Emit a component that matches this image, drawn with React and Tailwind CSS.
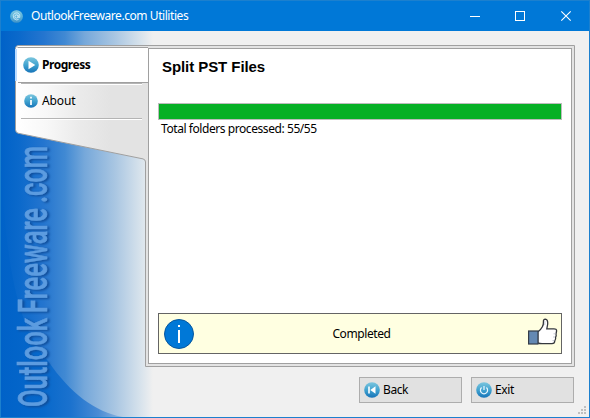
import React from 'react';

function Orb({ id, size, children }) {
  return (
    <svg width={size} height={size} viewBox="0 0 16 16" className="block shrink-0">
      <defs>
        <linearGradient id={id} x1="0" y1="0" x2="0" y2="1">
          <stop offset="0" stopColor="#7cc6de" />
          <stop offset="0.5" stopColor="#41a3d0" />
          <stop offset="1" stopColor="#1673b8" />
        </linearGradient>
      </defs>
      <circle cx="8" cy="8" r="7.8" fill={`url(#${id})`} />
      {children}
    </svg>
  );
}

function Backdrop() {
  return (
    <svg width="588" height="386" viewBox="1 31 588 386" className="absolute left-0 top-0">
      <defs>
        <linearGradient id="side" gradientUnits="userSpaceOnUse" x1="1" y1="0" x2="153" y2="0">
          <stop offset="0" stopColor="#0062c8" />
          <stop offset="0.12" stopColor="#0b69cb" />
          <stop offset="0.28" stopColor="#2475cf" />
          <stop offset="0.42" stopColor="#4089d3" />
          <stop offset="0.55" stopColor="#76a8da" />
          <stop offset="0.75" stopColor="#a9c6e2" />
          <stop offset="0.92" stopColor="#d8e3ec" />
          <stop offset="1" stopColor="#f0f0f0" />
        </linearGradient>
        <linearGradient id="corner" gradientUnits="userSpaceOnUse" x1="1" y1="0" x2="140" y2="0">
          <stop offset="0" stopColor="#0062c8" />
          <stop offset="0.3" stopColor="#0768cb" />
          <stop offset="0.5" stopColor="#1b72ce" />
          <stop offset="0.7" stopColor="#4a8bd4" />
          <stop offset="1" stopColor="#c4d7e8" />
        </linearGradient>
        <linearGradient id="menu" gradientUnits="userSpaceOnUse" x1="18" y1="0" x2="110" y2="0">
          <stop offset="0" stopColor="#ffffff" />
          <stop offset="0.3" stopColor="#f8f8f8" />
          <stop offset="0.65" stopColor="#ebebeb" />
          <stop offset="1" stopColor="#e3e3e3" />
        </linearGradient>
      </defs>
      <rect x="1" y="31" width="152" height="386" fill="url(#side)" />
      <path d="M1 150 C5 290 25 335 48 361 C70 393 95 412 123 417 L1 417 Z" fill="url(#corner)" />
      <path
        d="M18.5 45.5 H574.5 V366.5 H145.5 V162 Q145.5 159.5 143 158.9 L18 133.2 Q15.5 132.5 15.5 129.5 V48.5 Q15.5 45.5 18.5 45.5 Z"
        fill="url(#menu)"
        stroke="#a0a0a0"
      />
      <path d="M16 82.5 V49.5 L18 47.5 H148 V82.5 Z" fill="#fff" />
      <path d="M17.5 47.5 H148 M18 82.5 H148" stroke="#a0a0a0" />
      <path d="M16 49 V81" stroke="#bcdcff" strokeWidth="2" />
      <path d="M21 83.5 H142 M21 118.5 H142" stroke="#b4b4b4" />
      <path d="M21 84.5 H142 M21 119.5 H142" stroke="#fff" />
    </svg>
  );
}

function TitleBar() {
  return (
    <header className="flex h-[30px] shrink-0 items-center bg-[#0078d7] pl-[9px] text-white">
      <Orb id="logo" size={13}>
        <circle cx="8" cy="8" r="7.8" fill="#8fd0ea" fillOpacity="0.35" />
        <circle cx="8" cy="8" r="2" fill="none" stroke="#e8f8ff" strokeWidth="1" />
        <path d="M10 5.8 V9 Q10.5 10.5 12 9.2 Q13 5 9.8 3.8 Q5 2.8 4 7 Q3.6 11.5 8 12.2 L10.5 11.7" fill="none" stroke="#d8f1fb" strokeWidth="1" />
      </Orb>
      <span className="ml-2 whitespace-nowrap text-[12px] leading-5 tracking-[-0.44px]">OutlookFreeware.com Utilities</span>
      <svg width="103" height="12" viewBox="0 0 103 12" className="ml-auto mr-[17px]" fill="none" stroke="#fff">
        <path d="M1 6.5 H11" />
        <rect x="46.5" y="1.5" width="9" height="9" />
        <path d="M92.3 1.3 L101.7 10.7 M101.7 1.3 L92.3 10.7" strokeWidth="1.1" />
      </svg>
    </header>
  );
}

function Sidebar() {
  return (
    <nav className="flex w-[147px] shrink-0 flex-col pt-[17px] text-[12px] text-black">
      <div className="flex h-[34px] items-center pl-[22px]">
        <Orb id="play" size={16}>
          <path d="M5.5 3.8 L12.3 8 L5.5 12.2 Z" fill="#fff" />
        </Orb>
        <span className="ml-[3px] text-[12px] font-bold tracking-[-0.45px]">Progress</span>
      </div>
      <div className="mt-px flex h-[36px] items-center pl-[23px]">
        <Orb id="about" size={14}>
          <path d="M8 3.2 V5.2 M8 6.8 V12.6" stroke="#fff" strokeWidth="2" fill="none" />
        </Orb>
        <span className="ml-1 tracking-[-0.1px]">About</span>
      </div>
      <div className="mt-[20px] h-[274px]">
        <svg width="80" height="274" className="block overflow-visible drop-shadow-[2px_1px_1px_#0f4c98]">
          <text
            transform="translate(46 268) rotate(-90)"
            textLength="261"
            lengthAdjust="spacingAndGlyphs"
            fontFamily="Roboto, sans-serif"
            fontWeight="500"
            fontSize="40"
            wordSpacing="-2"
            fill="#5c9ce0"
            stroke="#5c9ce0"
            strokeWidth="0.7"
          >
            Outlook Freeware .com
          </text>
        </svg>
      </div>
    </nav>
  );
}

function Thumb() {
  return (
    <svg width="31" height="28" viewBox="0 0 31 28" className="-mt-1">
      <path d="M10.8 14 Q14 11.5 15.4 8.8 Q16.6 6.5 16.4 4 Q16.2 1.2 18.3 1.2 Q21 1.5 20.7 6 L19.8 10.8 H26.5 Q29.8 10.6 29.6 13 L29 16 Q29.6 18 28.6 19.2 Q29 21.5 27.8 22.7 Q27.7 25.6 25 25.6 H16 Q13 25.8 10.8 24.8 Z" fill="#fff" stroke="#35383d" strokeWidth="1.3" />
      <rect x="1.6" y="13" width="9.4" height="13" fill="#6489b3" stroke="#343c48" strokeWidth="1.2" />
      <path d="M17.8 3 V7 M28.5 15.8 H26.5 M28 19 H26 M27.2 22.5 H25.5" stroke="#c5cbd6" />
    </svg>
  );
}

function Panel() {
  return (
    <section className="flex h-[316px] w-[424px] flex-col border border-[#a0a0a0] bg-white px-[9px] pt-[8px] text-[12px]">
      <h1 className="pl-1 font-['Liberation_Sans',Arial,sans-serif] text-[15px] font-bold leading-[20px] tracking-[-0.07px]">Split PST Files</h1>
      <div className="mt-[26px] h-[17px] border border-[#bcbcbc] bg-[#06b025]" />
      <p className="pl-[3px] text-[12px] leading-[18px] tracking-[-0.43px]">Total folders processed: 55/55</p>
      <div className="mt-auto mb-[9px] flex h-[41px] items-center border border-[#646464] bg-[#ffffe1] pl-[5px] pr-[3px]">
        <svg width="30" height="30" viewBox="0 0 30 30">
          <circle cx="15" cy="15" r="14.5" fill="#0078d7" stroke="#07579e" />
          <path d="M15 6 V8 M15 11 V24" stroke="#fff" strokeWidth="2" />
        </svg>
        <span className="flex-1 pl-[2px] text-center tracking-[-0.4px]">Completed</span>
        <Thumb />
      </div>
    </section>
  );
}

function Button({ icon, label }) {
  return (
    <button className="flex h-[26px] w-[103px] items-center border border-[#adadad] bg-[#e1e1e1] pl-1 text-[12px]">
      {icon}
      <span className="ml-[3px] tracking-[-0.4px]">{label}</span>
    </button>
  );
}

export default function App() {
  return (
    <div className="flex h-[418px] w-[590px] flex-col overflow-hidden border border-[#1c80ce] bg-[#f0f0f0] font-['Noto_Sans','Open_Sans',sans-serif] text-black">
      <TitleBar />
      <main className="relative flex flex-1">
        <Backdrop />
        <div className="relative flex w-full">
          <Sidebar />
          <div className="flex flex-1 flex-col pt-[17px]">
            <Panel />
            <div className="mt-[13px] flex justify-end gap-[9px] pr-[15px]">
              <Button
                label="Back"
                icon={
                  <Orb id="back" size={16}>
                    <path d="M4.2 4.5 H5.8 V11.5 H4.2 Z M11.5 4.3 V11.7 L6.3 8 Z" fill="#fff" />
                  </Orb>
                }
              />
              <Button
                label="Exit"
                icon={
                  <Orb id="exit" size={16}>
                    <path d="M8 4 V8 M5.6 5.5 A3.6 3.6 0 1 0 10.4 5.5" fill="none" stroke="#e9f7ff" strokeWidth="1.2" />
                  </Orb>
                }
              />
            </div>
          </div>
        </div>
        <svg width="9" height="9" className="absolute bottom-[2px] right-[2px]" fill="#bfbfbf">
          <path d="M6 0h2v2h-2z M3 3h2v2h-2z M6 3h2v2h-2z M0 6h2v2h-2z M3 6h2v2h-2z M6 6h2v2h-2z" />
        </svg>
      </main>
    </div>
  );
}
